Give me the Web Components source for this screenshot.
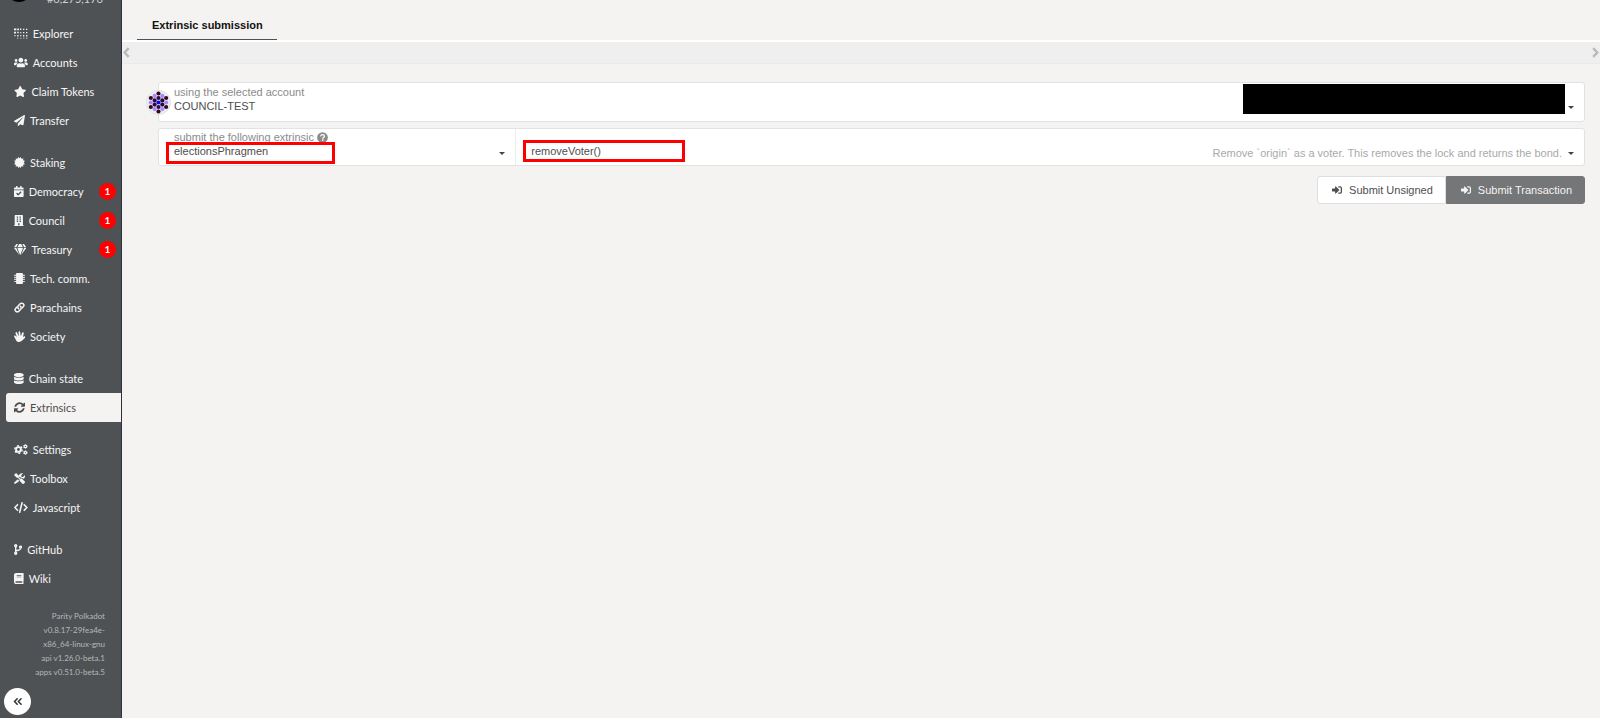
<!DOCTYPE html>
<html lang="en">
<head>
<meta charset="utf-8">
<title>Extrinsics</title>
<style>
  body {
    background: #f4f3f1;
    color: #4e4e4e;
    font-family: "Liberation Sans", Arial, sans-serif;
    font-size: 11px;
    margin: 0;
  }
</style>
</head>
<body>
<apps-page></apps-page>

<script>
const icons = {
  explorer: ['0 0 640 512', '<path d="M0 20h110v90H0zM150 20h80v80h-80zM280 20h60v70h-60zM420 30h60v60h-60zM560 30h60v60h-60zM0 170h90v90H0zM150 180h70v70h-70zM290 190h50v50h-50zM420 190h60v60h-60zM560 190h60v60h-60zM20 330h50v50H20zM150 330h60v60h-60zM290 330h50v50h-50zM420 330h60v60h-60zM560 330h60v60h-60zM150 450h50v40h-50zM290 450h50v40h-50zM430 450h50v40h-50zM560 450h60v40h-60z"/>'],
  users: ['0 0 640 512', '<path d="M96 224c35.3 0 64-28.700 64-64s-28.700-64-64-64-64 28.700-64 64 28.700 64 64 64zm448 0c35.300 0 64-28.700 64-64s-28.700-64-64-64-64 28.700-64 64 28.700 64 64 64zm32 32h-64c-17.600 0-33.500 7.100-45.100 18.600 40.300 22.100 68.900 62 75.100 109.400h66c17.700 0 32-14.300 32-32v-32c0-35.300-28.700-64-64-64zm-256 0c61.900 0 112-50.100 112-112S381.900 32 320 32 208 82.100 208 144s50.100 112 112 112zm76.800 32h-8.300c-20.800 10-43.900 16-68.500 16s-47.600-6-68.500-16h-8.300C179.600 288 128 339.600 128 403.200V432c0 26.500 21.500 48 48 48h288c26.500 0 48-21.500 48-48v-28.800c0-63.600-51.600-115.200-115.200-115.200zm-223.700-13.400C161.500 263.100 145.600 256 128 256H64c-35.300 0-64 28.700-64 64v32c0 17.700 14.300 32 32 32h65.900c6.300-47.400 34.900-87.300 75.200-109.400z"/>'],
  star: ['0 0 576 512', '<path d="M259 18 194 150 48 171c-26 4-37 36-18 55l106 103-25 145c-4 26 23 46 46 34l131-69 131 69c23 12 50-8 46-34l-25-145 106-103c19-19 8-51-18-55l-146-21-65-132c-12-24-46-24-58 0z"/>'],
  plane: ['0 0 512 512', '<path d="M476 3 12 271c-18 10-16 35 2 43l107 45L409 105c5-5 13 2 8 8L176 407v81c0 23 28 33 42 15l64-78 125 53c15 6 31-3 34-19l71-432c3-20-18-34-36-24z"/>'],
  cert: ['0 0 512 512', '<path d="m256 60 60-60 30 80 90-15-15 85 85 30-50 76 50 76-85 30 15 85-90-15-30 80-60-60-60 60-30-80-90 15 15-85-85-30 50-76-50-76 85-30-15-85 90 15 30-80z"/>'],
  calendar: ['0 0 448 512', '<path fill-rule="evenodd" d="M436 160H12c-7 0-12-5-12-12v-36c0-27 22-48 48-48h48V12c0-7 5-12 12-12h40c7 0 12 5 12 12v52h128V12c0-7 5-12 12-12h40c7 0 12 5 12 12v52h48c27 0 48 21 48 48v36c0 7-5 12-12 12zM12 192h424c7 0 12 5 12 12v260c0 27-21 48-48 48H48c-26 0-48-21-48-48V204c0-7 5-12 12-12zm333 96-28-28c-5-5-12-5-17 0L194 365l-46-46c-5-5-12-5-17 0l-28 28c-5 5-5 12 0 17l82 83c5 5 13 5 17 0L345 305c5-5 5-12 0-17z"/>'],
  building: ['0 0 448 512', '<path fill-rule="evenodd" d="M436 480h-20V24c0-13-11-24-24-24H56C43 0 32 11 32 24v456H12c-7 0-12 5-12 12v20h448v-20c0-7-5-12-12-12zM128 76c0-7 5-12 12-12h52v64h-64zm0 96c0-7 5-12 12-12h52v64h-64zm0 96v-12h64v64h-64zm128 212h-64v-96h64zm64-160h-64v-64h64zm0-96h-64v-64h64zm0-96h-64V64h64z"/>'],
  gem: ['0 0 576 512', '<path d="m464 0 112 152H469L391 0zM338 0l78 152H160L238 0zM185 0l-78 152H0L112 0zM0 184h108l132 304c2 5-4 9-7 5zm158 0h260L293 509c-2 4-8 4-10 0zm178 304 132-304h108L343 493c-3 4-9 0-7-5z"/>'],
  chip: ['0 0 512 512', '<path d="M144 0h224c27 0 48 21 48 48v416c0 27-21 48-48 48H144c-27 0-48-21-48-48V48c0-27 21-48 48-48zM14 80h70v56H14zm0 96h70v56H14zm0 96h70v56H14zm0 96h70v56H14zM428 80h70v56h-70zm0 96h70v56h-70zm0 96h70v56h-70zm0 96h70v56h-70z"/>'],
  link: ['0 0 512 512', '<g fill="none" stroke="currentColor" stroke-width="70" stroke-linecap="round"><path d="M218 316c-50-38-55-108-10-153l78-80c40-40 105-40 143 0s38 103 0 142l-54 54"/><path d="M294 196c50 38 55 108 10 153l-78 80c-40 40-105 40-143 0s-38-103 0-142l54-54"/></g>'],
  hand: ['0 0 512 512', '<path d="M26 210c22-12 47-3 58 16l36 42c5 8 16 2 13-6L68 107c-8-24 5-47 27-54 22-6 43 5 50 26l64 137c3 8 15 7 15-2l-14-160c-1-24 15-44 38-44s38 20 40 44l22 172c0 9 13 10 16 2l47-138c7-23 29-36 51-29s34 29 28 53l-37 168c-2 9 5 13 11 7l19-28c20-20 52-20 69-2s16 49-5 69L381 445c-42 42-83 67-144 67-72 0-118-34-147-96L11 268c-10-22-6-47 15-58z"/>'],
  database: ['0 0 448 512', '<path d="M448 73v46c0 40-100 73-224 73S0 159 0 119V73C0 33 100 0 224 0s224 33 224 73zm0 103v103c0 40-100 73-224 73S0 319 0 279V176c48 33 136 48 224 48s176-15 224-48zm0 160v103c0 40-100 73-224 73S0 479 0 439V336c48 33 136 48 224 48s176-15 224-48z"/>'],
  sync: ['0 0 512 512', '<path d="M371 142a163 163 0 0 0-272 75c-2 6-6 9-12 9H29c-8 0-13-7-12-14A247 247 0 0 1 430 82l48-47c12-12 34-4 34 14v150c0 11-9 20-20 20H340c-18 0-27-22-14-34zM20 293h152c18 0 27 22 14 34l-45 43a163 163 0 0 0 272-75c2-6 6-9 12-9h58c8 0 13 7 12 14A247 247 0 0 1 82 430l-48 47c-12 12-34 4-34-14V313c0-11 9-20 20-20z"/>'],
  cogs: ['0 0 640 512', '<g fill="none" stroke="currentColor"><circle cx="208" cy="256" r="112" stroke-width="90"/><circle cx="208" cy="256" r="175" stroke-width="60" stroke-dasharray="92 91"/><circle cx="528" cy="112" r="56" stroke-width="60"/><circle cx="528" cy="112" r="90" stroke-width="32" stroke-dasharray="47 47"/><circle cx="528" cy="400" r="56" stroke-width="60"/><circle cx="528" cy="400" r="90" stroke-width="32" stroke-dasharray="47 47"/></g>'],
  tools: ['0 0 512 512', '<path d="M502 395 386 279c-23-23-56-28-84-16l-78-78v-57L96 0 0 96l128 128h57l78 78c-12 28-7 61 16 84l116 116c14 14 38 14 53 0l54-54c14-15 14-39 0-53zM331 225c34-1 62 6 85 30l16 16c26-12 46-30 60-54 18-31 24-67 16-99-2-9-13-12-20-5l-74 74-68-11-11-68 74-74c7-7 4-18-5-20-49-12-103 1-141 39-29 29-42 68-41 106zM228 335 179 286 19 430c-25 25-25 38 0 63s38 25 63 0l152-110c-5-15-8-31-6-48z"/>'],
  code: ['0 0 640 512', '<g fill="none" stroke="currentColor" stroke-width="72" stroke-linecap="round" stroke-linejoin="round"><path d="M165 125 40 256l125 131M475 125l125 131-125 131M375 35 265 477"/></g>'],
  branch: ['0 0 384 512', '<g fill="none" stroke="currentColor" stroke-width="66"><circle cx="80" cy="80" r="46"/><circle cx="80" cy="432" r="46"/><circle cx="304" cy="144" r="46"/><path d="M80 128v256M304 192c0 110-90 80-190 120"/></g>'],
  book: ['0 0 448 512', '<path fill-rule="evenodd" d="M448 360V24c0-13-11-24-24-24H96C43 0 0 43 0 96v320c0 53 43 96 96 96h328c13 0 24-11 24-24v-16c0-8-4-14-9-19-4-15-4-59 0-74 5-4 9-11 9-19zM128 134h212v-28H128zm0 64h212v-28H128zm253 250H96c-42 0-42-64 0-64h285c-2 17-2 47 0 64z"/>'],
  login: ['0 0 512 512', '<path d="M416 448h-84c-7 0-12-5-12-12v-40c0-7 5-12 12-12h84c18 0 32-14 32-32V160c0-18-14-32-32-32h-84c-7 0-12-5-12-12V76c0-7 5-12 12-12h84c53 0 96 43 96 96v192c0 53-43 96-96 96zm-47-209L201 71c-15-15-41-5-41 17v96H24c-13 0-24 11-24 24v96c0 13 11 24 24 24h136v96c0 22 26 32 41 17l168-168c9-9 9-25 0-34z"/>'],
  help: ['0 0 512 512', '<circle cx="256" cy="256" r="250"/><g fill="none" stroke="#fff" stroke-width="60"><path d="M165 205c14-60 52-78 91-78 49 0 88 30 88 72 0 61-78 55-78 113"/><path d="M266 342v60" stroke-width="66"/></g>'],
  collapse: ['0 0 448 512', '<g fill="none" stroke="currentColor" stroke-width="72" stroke-linecap="round" stroke-linejoin="round"><path d="M195 130 70 256l125 126M375 130 250 256l125 126"/></g>'],
  left: ['0 0 320 512', '<path d="M265 50 75 256l190 206" fill="none" stroke="currentColor" stroke-width="110"/>'],
  right: ['0 0 320 512', '<path d="M55 50l190 206L55 462" fill="none" stroke="currentColor" stroke-width="110"/>']
}

class AppIcon extends HTMLElement {
  constructor () {
    super()
    this.shadow = this.attachShadow({ mode: 'open' })
  }

  connectedCallback () {
    const [box, shape] = icons[this.getAttribute('name')]

    this.shadow.innerHTML =
      /* html */`
        <style>
          :host {
            display: inline-flex;
            flex: none;
          }

          svg {
            display: block;
            fill: currentColor;
            height: var(--icon-size, 11px);
            width: auto;
          }
        </style>
        <svg viewBox="${box}" aria-hidden="true">${shape}</svg>
      `
  }
}

class NavItem extends HTMLElement {
  constructor () {
    super()
    this.shadow = this.attachShadow({ mode: 'open' })
  }

  connectedCallback () {
    const count = this.getAttribute('count')

    this.shadow.innerHTML =
      /* html */`
        <style>
          :host {
            display: block;
            padding-left: 6px;
          }

          a {
            align-items: center;
            border-radius: 3px 0 0 3px;
            color: #f5f5f5;
            display: flex;
            gap: 5px;
            height: 29px;
            padding: 0 5px 0 8px;
            text-decoration: none;
          }

          :host([active]) a {
            background: #f4f3f1;
            color: #4e4e4e;
          }

          .count {
            background: #f00;
            border-radius: 50%;
            font-size: 10px;
            font-weight: bold;
            height: 17px;
            line-height: 17px;
            margin-left: auto;
            text-align: center;
            width: 17px;
          }
        </style>
        <a href="#">
          <app-icon name="${this.getAttribute('icon')}"></app-icon>
          <span><slot></slot></span>
          ${count ? `<span class="count">${count}</span>` : ''}
        </a>
      `
  }
}

class SideBar extends HTMLElement {
  constructor () {
    super()
    this.shadow = this.attachShadow({ mode: 'open' })
  }

  connectedCallback () {
    this.shadow.innerHTML =
      /* html */`
        <style>
          :host {
            background: #4f5255;
            border-right: 1px solid #2b313b;
            box-sizing: border-box;
            color: #f5f5f5;
            display: flex;
            flex: none;
            flex-direction: column;
            font-family: Lato, sans-serif;
            font-size: 11px;
            overflow: hidden;
            width: 122px;
          }

          /* the chain summary is scrolled mostly out of view */
          .chain {
            align-items: flex-end;
            display: flex;
            justify-content: space-between;
            margin: -24px 18px 14px 6px;
          }

          .logo {
            background: #000;
            border-radius: 50%;
            height: 26px;
            margin-bottom: 3px;
            width: 26px;
          }

          .block {
            color: #d0d1d2;
            font-size: 11px;
            line-height: 14px;
            margin-bottom: -1px;
          }

          nav {
            display: flex;
            flex-direction: column;
            gap: 13px;
          }

          .versions {
            color: #b5b7b8;
            font-size: 8px;
            line-height: 14px;
            margin: 16px 16px 0 0;
            text-align: right;
          }

          button {
            align-items: center;
            background: #fff;
            border: none;
            border-radius: 50%;
            color: #333;
            display: flex;
            height: 27px;
            justify-content: center;
            margin: 9px 0 0 4px;
            padding: 0;
            width: 27px;
          }
        </style>
        <div class="chain">
          <span class="logo"></span>
          <span class="block">#6,275,176</span>
        </div>
        <nav>
          <div>
            <nav-item icon="explorer">Explorer</nav-item>
            <nav-item icon="users">Accounts</nav-item>
            <nav-item icon="star">Claim Tokens</nav-item>
            <nav-item icon="plane">Transfer</nav-item>
          </div>
          <div>
            <nav-item icon="cert">Staking</nav-item>
            <nav-item icon="calendar" count="1">Democracy</nav-item>
            <nav-item icon="building" count="1">Council</nav-item>
            <nav-item icon="gem" count="1">Treasury</nav-item>
            <nav-item icon="chip">Tech. comm.</nav-item>
            <nav-item icon="link">Parachains</nav-item>
            <nav-item icon="hand">Society</nav-item>
          </div>
          <div>
            <nav-item icon="database">Chain state</nav-item>
            <nav-item icon="sync" active>Extrinsics</nav-item>
          </div>
          <div>
            <nav-item icon="cogs">Settings</nav-item>
            <nav-item icon="tools">Toolbox</nav-item>
            <nav-item icon="code">Javascript</nav-item>
          </div>
          <div>
            <nav-item icon="branch">GitHub</nav-item>
            <nav-item icon="book">Wiki</nav-item>
          </div>
        </nav>
        <div class="versions">
          <div>Parity Polkadot</div>
          <div>v0.8.17-29fea4e-</div>
          <div>x86_64-linux-gnu</div>
          <div>api v1.26.0-beta.1</div>
          <div>apps v0.51.0-beta.5</div>
        </div>
        <button aria-label="Collapse menu"><app-icon name="collapse"></app-icon></button>
      `
  }
}

class TabBar extends HTMLElement {
  constructor () {
    super()
    this.shadow = this.attachShadow({ mode: 'open' })
  }

  connectedCallback () {
    this.shadow.innerHTML =
      /* html */`
        <style>
          :host {
            display: block;
          }

          .tabs {
            border-bottom: 2px solid #fff;
            display: flex;
            padding: 12px 15px 0;
          }

          a {
            border-bottom: 1px solid #4f5255;
            color: #111;
            font-weight: bold;
            line-height: 27px;
            padding: 0 14px 0 15px;
            text-decoration: none;
          }

          .scroll {
            background: #efefef;
            border-bottom: 1px solid #e9e9e9;
            color: #b9b9b9;
            display: flex;
            height: 21px;
            justify-content: space-between;
          }

          button {
            align-items: center;
            background: none;
            border: none;
            color: inherit;
            display: flex;
            padding: 0 1px;
          }
        </style>
        <div class="tabs"><a href="#"><slot></slot></a></div>
        <div class="scroll">
          <button aria-label="Previous tabs"><app-icon name="left"></app-icon></button>
          <button aria-label="Next tabs"><app-icon name="right"></app-icon></button>
        </div>
      `
  }
}

class IdentIcon extends HTMLElement {
  constructor () {
    super()
    this.shadow = this.attachShadow({ mode: 'open' })
  }

  connectedCallback () {
    const dark = '#2b0a3d'
    const maroon = '#3d0320'
    const light = '#a18bff'
    const dots = [
      [32, 6, maroon], [32, 19, dark], [32, 32, '#1200ff'], [32, 45, dark], [32, 58, maroon],
      [21, 13, light], [43, 13, light], [21, 26, dark], [43, 26, dark], [21, 38, dark], [43, 38, dark],
      [21, 51, light], [43, 51, light], [10, 19, maroon], [54, 19, maroon], [10, 32, light], [54, 32, light],
      [10, 45, maroon], [54, 45, maroon]
    ]

    this.shadow.innerHTML =
      /* html */`
        <style>
          :host {
            display: block;
          }

          svg {
            display: block;
            height: 25px;
            width: 25px;
          }
        </style>
        <svg viewBox="-4 -4 72 72" aria-hidden="true">
          <circle cx="32" cy="32" r="35" fill="#eee" stroke="#dcdcdc" stroke-width="2"/>
          ${dots.map(([x, y, fill]) => `<circle cx="${x}" cy="${y}" r="6" fill="${fill}"/>`).join('')}
        </svg>
      `
  }
}

class SelectField extends HTMLElement {
  constructor () {
    super()
    this.shadow = this.attachShadow({ mode: 'open' })
  }

  connectedCallback () {
    const label = this.getAttribute('label')
    const help = this.hasAttribute('help')

    this.shadow.innerHTML =
      /* html */`
        <style>
          :host {
            display: flex;
            flex-direction: column;
            justify-content: flex-end;
            position: relative;
          }

          label {
            align-items: center;
            color: #8b8b8b;
            display: flex;
            gap: 3px;
            line-height: 14px;
            padding-left: 15px;
          }

          select {
            appearance: none;
            background: none;
            border: none;
            color: #4e4e4e;
            font: inherit;
            height: 15px;
            line-height: 15px;
            padding: 0 15px;
            width: 100%;
          }

          .caret {
            border: 3px solid transparent;
            border-bottom: none;
            border-top-color: #444;
            bottom: var(--caret-bottom, 10px);
            position: absolute;
            right: 10px;
          }

          .side {
            color: #a9a9a9;
            position: absolute;
            right: 22px;
          }

          /* frame drawn round the chosen value */
          .mark {
            border: 3px solid #f00;
            box-sizing: border-box;
            height: 22px;
            left: 7px;
            pointer-events: none;
            position: absolute;
            top: var(--mark-top, 13px);
            width: var(--mark-width, 169px);
          }
        </style>
        ${label ? `<label for="field">${label}${help ? '<app-icon name="help"></app-icon>' : ''}</label>` : ''}
        <select id="field" aria-label="${label || 'method'}">
          <option>${this.getAttribute('value')}</option>
        </select>
        <span class="side"><slot></slot></span>
        <span class="caret"></span>
        ${this.hasAttribute('marked') ? '<span class="mark"></span>' : ''}
      `
  }
}

class SubmitButton extends HTMLElement {
  constructor () {
    super()
    this.shadow = this.attachShadow({ mode: 'open' })
  }

  connectedCallback () {
    this.shadow.innerHTML =
      /* html */`
        <style>
          button {
            --icon-size: 10px;
            align-items: center;
            background: #fff;
            border: 1px solid #dededf;
            border-radius: 3px 0 0 3px;
            color: #4e4e4e;
            display: flex;
            font: inherit;
            gap: 7px;
            height: 28px;
            padding: 0 12px 0 14px;
          }

          :host([primary]) button {
            background: #747678;
            border-color: #747678;
            border-radius: 0 3px 3px 0;
            color: #f5f5f5;
          }
        </style>
        <button type="button"><app-icon name="login"></app-icon><slot></slot></button>
      `
  }
}

class AppsPage extends HTMLElement {
  constructor () {
    super()
    this.shadow = this.attachShadow({ mode: 'open' })
  }

  connectedCallback () {
    this.shadow.innerHTML =
      /* html */`
        <style>
          :host {
            display: flex;
            min-height: 100vh;
          }

          main {
            flex: 1;
            min-width: 0;
          }

          form {
            display: flex;
            flex-direction: column;
            gap: 6px;
            padding: 18px 15px 0 36px;
          }

          .card {
            background: #fff;
            border: 1px solid #e2e2e3;
            border-radius: 3px;
            box-sizing: border-box;
            display: flex;
            position: relative;
          }

          .account {
            height: 40px;
            padding-bottom: 7px;
          }

          .account select-field {
            --caret-bottom: 5px;
            flex: 1;
          }

          .call {
            height: 38px;
          }

          .call select-field {
            box-sizing: border-box;
            padding-bottom: 6px;
          }

          .section {
            width: 25%;
          }

          .method {
            --mark-top: 11px;
            --mark-width: 162px;
            border-left: 1px solid #ececec;
            flex: 1;
          }

          ident-icon {
            left: -13px;
            position: absolute;
            top: 7px;
          }

          .redacted {
            background: #000;
            display: block;
            height: 30px;
            margin: 0 -3px 0 0;
            width: 322px;
          }

          .buttons {
            display: flex;
            justify-content: flex-end;
            margin-top: 4px;
          }
        </style>
        <side-bar></side-bar>
        <main>
          <tab-bar>Extrinsic submission</tab-bar>
          <form>
            <div class="card account">
              <ident-icon></ident-icon>
              <select-field label="using the selected account" value="COUNCIL-TEST">
                <span class="redacted"></span>
              </select-field>
            </div>
            <div class="card call">
              <select-field class="section" label="submit the following extrinsic" value="electionsPhragmen" help marked></select-field>
              <select-field class="method" value="removeVoter()" marked>Remove \`origin\` as a voter. This removes the lock and returns the bond.</select-field>
            </div>
            <div class="buttons">
              <submit-button>Submit Unsigned</submit-button>
              <submit-button primary>Submit Transaction</submit-button>
            </div>
          </form>
        </main>
      `
  }
}

customElements.define('app-icon', AppIcon)
customElements.define('nav-item', NavItem)
customElements.define('side-bar', SideBar)
customElements.define('tab-bar', TabBar)
customElements.define('ident-icon', IdentIcon)
customElements.define('select-field', SelectField)
customElements.define('submit-button', SubmitButton)
customElements.define('apps-page', AppsPage)
</script>
</body>
</html>
